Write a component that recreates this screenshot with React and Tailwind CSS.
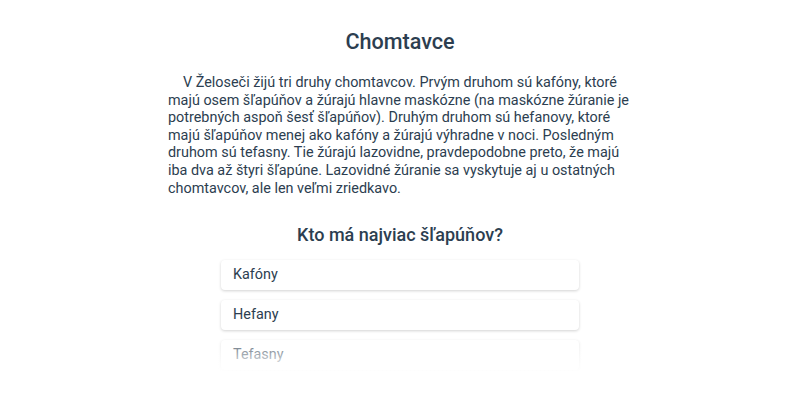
const OPTIONS = ["Kafóny", "Hefany", "Tefasny"];

export default function App() {
  return (
    <div
      className="relative h-[400px] w-[800px] overflow-hidden bg-white text-[#2c3e50]"
      style={{ fontFamily: "Roboto, 'Liberation Sans', sans-serif" }}
    >
      <div className="mx-auto w-[464px] pt-[27px]">
        <h1 className="text-center text-[21.6px] font-medium leading-[30px]">Chomtavce</h1>
        <p className="mt-[17px] indent-[15px] text-[14.4px] leading-[17.6px]">
          V Želoseči žijú tri druhy chomtavcov. Prvým druhom sú kafóny, ktoré majú osem šľapúňov
          a žúrajú hlavne maskózne (na maskózne žúranie je potrebných aspoň šesť šľapúňov). Druhým
          druhom sú hefanovy, ktoré majú šľapúňov menej ako kafóny a žúrajú výhradne v noci.
          Posledným druhom sú tefasny. Tie žúrajú lazovidne, pravdepodobne preto, že majú iba dva
          až štyri šľapúne. Lazovidné žúranie sa vyskytuje aj u ostatných chomtavcov, ale len veľmi
          zriedkavo.
        </p>
        <h2 className="mt-[26px] text-center text-[18px] font-medium leading-[24px]">
          Kto má najviac šľapúňov?
        </h2>
      </div>
      <div className="mx-auto mt-[13px] flex w-[358px] flex-col gap-[10px]">
        {OPTIONS.map((option) => (
          <button
            key={option}
            type="button"
            className="h-[30px] rounded-[4px] bg-white px-[12px] text-left text-[14.4px] shadow-[0_1px_3px_rgba(0,0,0,0.18)]"
          >
            {option}
          </button>
        ))}
      </div>
      <div className="absolute inset-x-0 top-[332px] h-[40px] bg-gradient-to-b from-white/0 to-white" />
      <div className="absolute inset-x-0 top-[372px] bottom-0 bg-white" />
    </div>
  );
}
